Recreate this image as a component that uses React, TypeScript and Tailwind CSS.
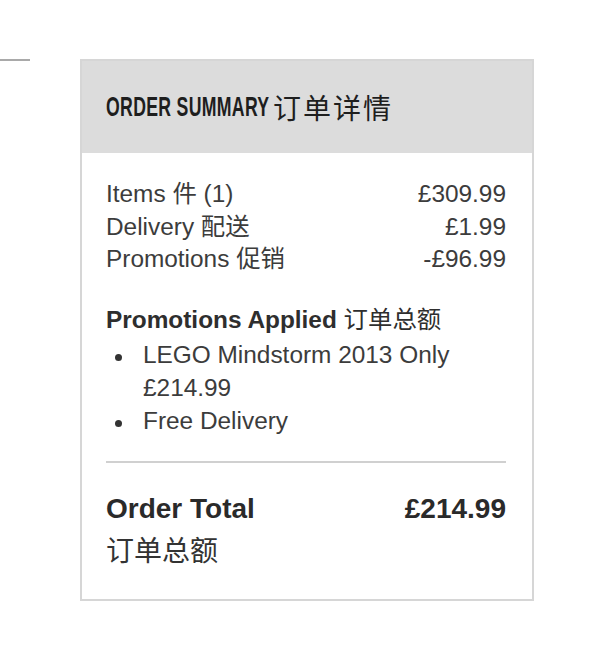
import React from 'react';

const latin = { fontFamily: '"Liberation Sans", "Noto Sans CJK SC", Arial, sans-serif' };

const lines = [
  { label: 'Items 件 (1)', value: '£309.99' },
  { label: 'Delivery 配送', value: '£1.99' },
  { label: 'Promotions 促销', value: '-£96.99' },
];

const promos = ['LEGO Mindstorm 2013 Only £214.99', 'Free Delivery'];

export default function App() {
  return (
    <div className="min-h-screen bg-white pt-[59px]" style={latin}>
      <div className="flex items-start">
        {/* stray rule from the column on the left */}
        <div className="h-[2px] w-[30px] bg-[#a9a9a9]" />

        {/* Order summary card */}
        <div className="ml-[50px] w-[454px] border-2 border-[#d6d6d6]">
          <div className="flex h-[92px] items-center bg-[#dcdcdc] px-[24px] text-[#1e1e1e]">
            <span className="inline-block w-[167px] overflow-visible whitespace-nowrap">
              <span
                className="inline-block origin-left scale-x-[0.62] text-[28.5px] font-bold leading-none tracking-[0.5px]"
                style={{ fontFamily: '"Liberation Sans", Arial, sans-serif' }}
              >
                ORDER SUMMARY
              </span>
            </span>
            <span
              className="text-[28px] leading-none tracking-[2px]"
              style={{ fontFamily: '"Noto Sans CJK SC", sans-serif' }}
            >
              订单详情
            </span>
          </div>

          <div className="pl-[24px] pr-[26px] pt-[25px] pb-[29px]">
            {/* Cost breakdown */}
            <div className="text-[24.4px] leading-[32.5px] text-[#3c3c3c]">
              {lines.map((line) => (
                <div key={line.label} className="flex justify-between">
                  <span>{line.label}</span>
                  <span>{line.value}</span>
                </div>
              ))}
            </div>

            {/* Promotions */}
            <p className="mt-[27px] text-[24.4px] font-bold leading-[33px] text-[#2e2e2e]">
              Promotions Applied <span className="font-normal">订单总额</span>
            </p>
            <ul className="mt-[2px] text-[24.4px] leading-[33px] text-[#3c3c3c]">
              {promos.map((promo) => (
                <li key={promo} className="flex items-start">
                  <span className="ml-[9px] mt-[16px] h-[7px] w-[7px] shrink-0 rounded-full bg-[#333]" />
                  <span className="ml-[21px] w-[330px]">{promo}</span>
                </li>
              ))}
            </ul>

            <div className="mt-[24px] h-[2px] bg-[#d0d0d0]" />

            {/* Total */}
            <div className="mt-[25px] text-[28px] leading-[41px] text-[#2a2a2a]">
              <div className="flex justify-between font-bold">
                <span>Order Total</span>
                <span>£214.99</span>
              </div>
              <div className="text-[#333]" style={{ fontFamily: '"Noto Sans CJK SC", sans-serif' }}>
                订单总额
              </div>
            </div>
          </div>
        </div>
      </div>
    </div>
  );
}
